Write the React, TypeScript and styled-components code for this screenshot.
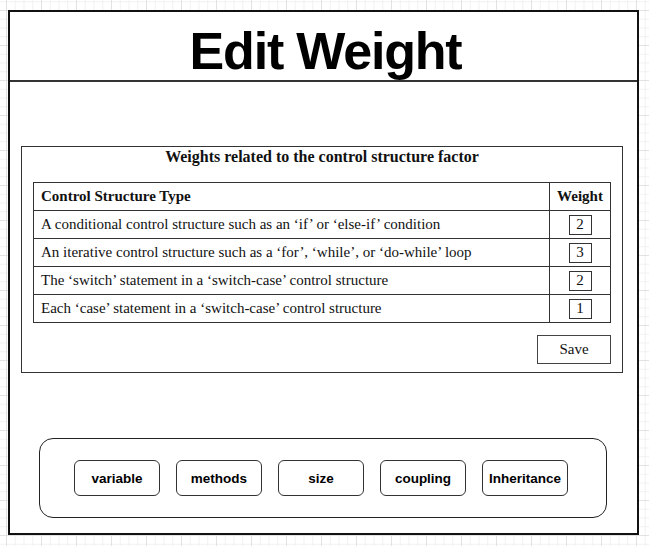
import React from "react";
import styled, { createGlobalStyle } from "styled-components";

const GlobalStyle = createGlobalStyle`
  html, body {
    height: 100%;
  }
  body {
    margin: 0;
    background-color: #fff;
    background-image:
      linear-gradient(#e2e2e2 1px, transparent 1px),
      linear-gradient(90deg, #e2e2e2 1px, transparent 1px),
      linear-gradient(#f1f1f1 1px, transparent 1px),
      linear-gradient(90deg, #f1f1f1 1px, transparent 1px);
    background-size: 35px 35px, 35px 35px, 8.75px 8.75px, 8.75px 8.75px;
    background-position: 6px 10px, 6px 10px, 6px 10px, 6px 10px;
  }
  #root {
    padding: 10px 0 0 8px;
  }
`;

const Frame = styled.div`
  box-sizing: border-box;
  width: 631px;
  height: 525px;
  border: 2px solid #111;
  background: #fff;
  display: flex;
  flex-direction: column;
`;

const Header = styled.header`
  height: 68px;
  border-bottom: 2px solid #333;
  display: flex;
  justify-content: center;
  align-items: flex-end;
`;

const Title = styled.h1`
  margin: 0 0 -1px 4px;
  font-family: "Liberation Sans", Arial, sans-serif;
  font-weight: 700;
  font-size: 52px;
  letter-spacing: -1.2px;
  line-height: normal;
  color: #000;
`;

const Sheet = styled.section`
  margin: 64px 14px 0 11px;
  border: 1px solid #333;
  padding: 0 11px 8px;
  font-family: "Liberation Serif", "Times New Roman", serif;
  color: #111;
  display: flex;
  flex-direction: column;
`;

const Caption = styled.div`
  font-weight: 700;
  font-size: 16px;
  line-height: 20px;
  text-align: center;
  margin-bottom: 15px;
`;

const Table = styled.table`
  width: 100%;
  border-collapse: collapse;
  border: 1px solid #333;
  font-size: 15px;
`;

const Cell = styled.td<{ $head?: boolean; $weight?: boolean }>`
  height: 27px;
  padding: 0 ${({ $weight }) => ($weight ? "0" : "7px")};
  border: 1px solid #333;
  font-weight: ${({ $head }) => ($head ? 700 : 400)};
  text-align: ${({ $weight }) => ($weight ? "center" : "left")};
  width: ${({ $weight }) => ($weight ? "60px" : "auto")};
  vertical-align: middle;
  white-space: nowrap;
`;

const WeightBox = styled.span`
  display: inline-flex;
  box-sizing: border-box;
  width: 23px;
  height: 20px;
  border: 1px solid #333;
  align-items: center;
  justify-content: center;
  line-height: 1;
  vertical-align: middle;
`;

const SaveRow = styled.div`
  display: flex;
  justify-content: flex-end;
  margin-top: 12px;
`;

const SaveButton = styled.button`
  box-sizing: border-box;
  width: 74px;
  height: 29px;
  border: 1px solid #444;
  background: #fff;
  font-family: "Liberation Serif", "Times New Roman", serif;
  font-size: 15px;
  color: #111;
  padding: 0;
`;

const Nav = styled.nav`
  box-sizing: border-box;
  height: 80px;
  margin: auto 30px 15px 29px;
  border: 1.5px solid #222;
  border-radius: 14px;
  display: flex;
  align-items: center;
  justify-content: center;
  gap: 15.5px;
  padding-right: 4px;
`;

const NavButton = styled.button`
  box-sizing: border-box;
  width: 86.5px;
  height: 36px;
  border: 1.5px solid #333;
  border-radius: 6px;
  background: #fff;
  font-family: "Liberation Sans", Arial, sans-serif;
  font-weight: 700;
  font-size: 13.5px;
  color: #000;
  padding: 0;
`;

const rows = [
  { text: "A conditional control structure such as an \u2018if\u2019 or \u2018else-if\u2019 condition", weight: 2 },
  { text: "An iterative control structure such as a \u2018for\u2019, \u2018while\u2019, or \u2018do-while\u2019 loop", weight: 3 },
  { text: "The \u2018switch\u2019 statement in a \u2018switch-case\u2019 control structure", weight: 2 },
  { text: "Each \u2018case\u2019 statement in a \u2018switch-case\u2019 control structure", weight: 1 },
];

const tabs = ["variable", "methods", "size", "coupling", "Inheritance"];

export default function App() {
  return (
    <>
      <GlobalStyle />
      <Frame>
        <Header>
          <Title>Edit Weight</Title>
        </Header>
        <Sheet>
          <Caption>Weights related to the control structure factor</Caption>
          <Table>
            <tbody>
              <tr>
                <Cell $head>Control Structure Type</Cell>
                <Cell $head $weight>Weight</Cell>
              </tr>
              {rows.map((r) => (
                <tr key={r.text}>
                  <Cell>{r.text}</Cell>
                  <Cell $weight>
                    <WeightBox>{r.weight}</WeightBox>
                  </Cell>
                </tr>
              ))}
            </tbody>
          </Table>
          <SaveRow>
            <SaveButton>Save</SaveButton>
          </SaveRow>
        </Sheet>
        <Nav>
          {tabs.map((t) => (
            <NavButton key={t}>{t}</NavButton>
          ))}
        </Nav>
      </Frame>
    </>
  );
}
